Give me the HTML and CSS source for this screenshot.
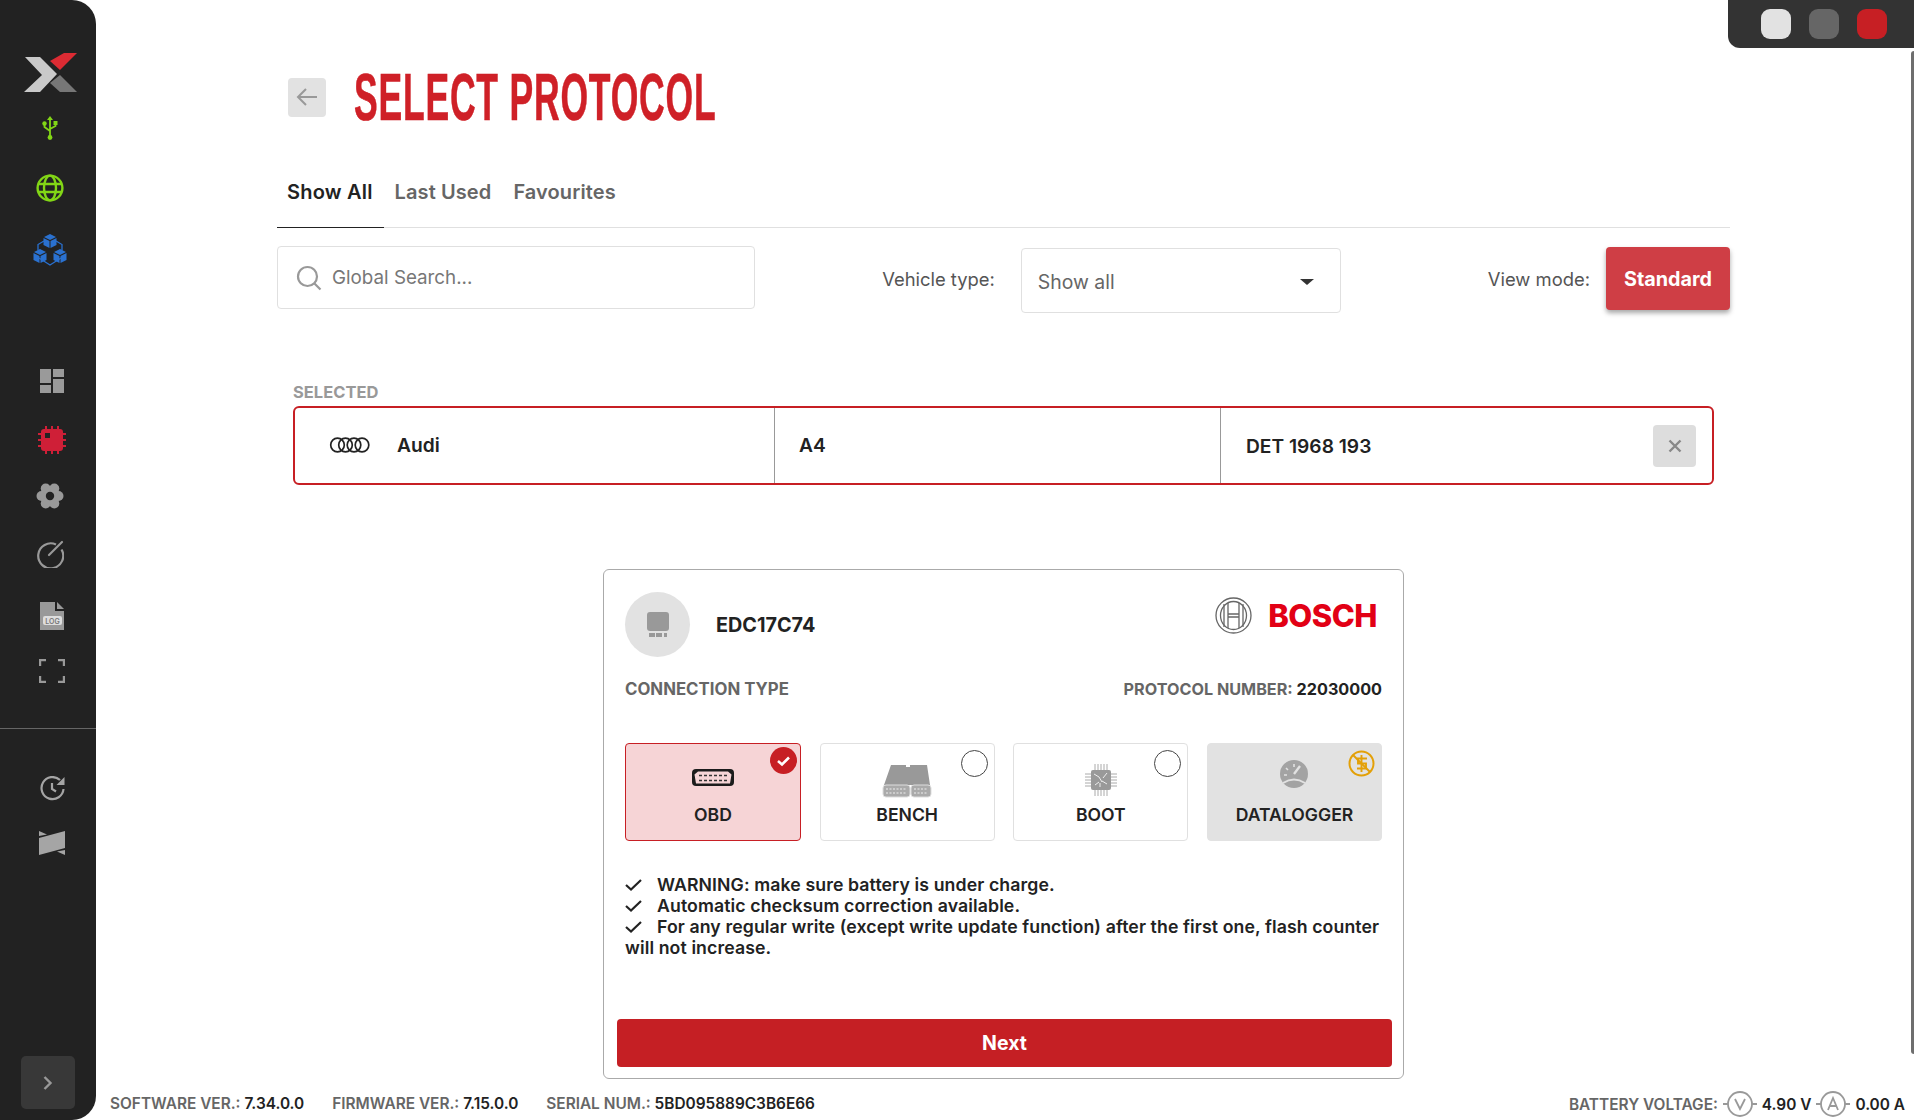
FILE: index.html
```html
<!DOCTYPE html>
<html lang="en">
<head>
    <meta charset="UTF-8">
    <title>Select Protocol</title>
    <link rel="stylesheet" href="styles.css">
</head>
<body>
    <aside class="sidebar">
        <svg class="logo" width="54" height="39" viewBox="0 0 54 39">
            <polygon points="1,4 16,4 33,21 16,39 0,39 18,22" fill="#c9c9c9"/>
            <polygon points="40,0 53,0 36,17 26,8" fill="#dc2b33"/>
            <polygon points="36,22 53,39 36,39 26,30" fill="#777"/>
        </svg>
        <svg class="icon-usb" width="16" height="24" viewBox="0 0 16 24" fill="none" stroke="#82d616" stroke-width="1.8">
            <path d="M8 3v18M2.500 8v3l5.500 4M13.500 7v3l-5.500 3"/>
            <path d="M8 0l3 4H5z" fill="#82d616" stroke="none"/>
            <circle cx="2.500" cy="7.500" r="2.200" fill="#82d616" stroke="none"/>
            <rect x="11.500" y="5" width="4" height="4" fill="#82d616" stroke="none"/>
            <circle cx="8" cy="21.500" r="2.400" fill="#82d616" stroke="none"/>
        </svg>
        <svg class="icon-globe" width="28" height="28" viewBox="0 0 28 28" fill="none" stroke="#82d616" stroke-width="2.400">
            <circle cx="14" cy="14" r="12.400"/>
            <ellipse cx="14" cy="14" rx="6" ry="12.400"/>
            <path d="M2 10h24M2 18h24"/>
        </svg>
        <svg class="icon-cubes" width="34" height="33" viewBox="0 0 34 33">
            <path d="M11 7L5 10.500v6M23 7l6 3.500v6M6 24l11 7 11-7" fill="none" stroke="#2a71d0" stroke-width="1.300"/>
            <g fill="#2a71d0">
                <path d="M17 0l6 3-6 3-6-3zM10.500 4l6 3v7l-6-3zM23.500 4l-6 3v7l6-3z"/>
                <path d="M7 15l6 3-6 3-6-3zM.5 19l6 3v7l-6-3zM13.500 19l-6 3v7l6-3z"/>
                <path d="M27 15l6 3-6 3-6-3zM20.500 19l6 3v7l-6-3zM33.500 19l-6 3v7l6-3z"/>
            </g>
        </svg>

        <nav class="nav-main">
            <div class="nav-slot shift">
                <svg width="24" height="24" viewBox="0 0 24 24" fill="#9a9a9a">
                    <rect width="11" height="14"/><rect y="16" width="11" height="8"/>
                    <rect x="13" width="11" height="8"/><rect x="13" y="10" width="11" height="14"/>
                </svg>
            </div>
            <div class="nav-slot shift drop-small">
                <svg width="28" height="28" viewBox="0 0 28 28">
                    <path d="M8 0v28M14 0v28M20 0v28M0 8h28M0 14h28M0 20h28" stroke="#cf1f37" stroke-width="2"/>
                    <rect x="3" y="3" width="22" height="22" rx="3" fill="#cf1f37"/>
                    <rect x="7" y="7" width="5" height="5" fill="#222"/>
                </svg>
            </div>
            <div class="nav-slot">
                <svg width="28" height="26" viewBox="-14 -13 28 26" fill="#999">
                    <circle r="9.500"/>
                    <circle cx="8.500" r="5"/><circle cx="-8.500" r="5"/>
                    <circle cx="4.300" cy="-7.500" r="5"/><circle cx="-4.300" cy="-7.500" r="5"/>
                    <circle cx="4.300" cy="7.500" r="5"/><circle cx="-4.300" cy="7.500" r="5"/>
                    <circle r="4.200" fill="#222"/>
                </svg>
            </div>
            <div class="nav-slot">
                <svg width="28" height="28" viewBox="0 0 28 28" fill="none" stroke="#999" stroke-width="2.200">
                    <path d="M20 4.500A12.500 12.500 0 1 0 25.500 9.500"/>
                    <path d="M13 15L26 2" stroke-linecap="round"/>
                </svg>
            </div>
            <div class="nav-slot shift drop-large">
                <svg width="24" height="28" viewBox="0 0 24 28">
                    <path d="M0 0h15v9h9v19H0z" fill="#999"/>
                    <path d="M17 0l7 7h-7z" fill="#999"/>
                    <rect x="3" y="14" width="19" height="9" rx="2" fill="#ddd"/>
                    <text x="12.500" y="21.500" class="log-text">LOG</text>
                </svg>
            </div>
            <div class="nav-slot shift drop-small">
                <svg width="26" height="24" viewBox="0 0 26 24" fill="none" stroke="#999" stroke-width="2.400">
                    <path d="M7 1H1v6M19 1h6v6M1 17v6h6M25 17v6h-6"/>
                </svg>
            </div>
        </nav>

        <div class="sidebar-rule"></div>

        <nav class="nav-extra">
            <div class="nav-slot shift">
                <svg width="25" height="25" viewBox="0 0 25 25" fill="none" stroke="#a5a5a5" stroke-width="2.200">
                    <path d="M20 4A11 11 0 1 0 23.500 13"/>
                    <path d="M12 7v6l4 2.500"/>
                    <path d="M24.500 1v8h-8z" fill="#a5a5a5" stroke="none"/>
                </svg>
            </div>
            <div class="nav-slot shift">
                <svg width="26" height="24" viewBox="0 0 26 24" fill="#a5a5a5">
                    <polygon points="0,7 26,0 26,17 0,24"/>
                    <polygon points="0,0 8,3.500 0,5"/>
                    <polygon points="26,24 18,20.500 26,19"/>
                </svg>
            </div>
        </nav>

        <button class="expand">
            <svg width="10" height="16" viewBox="0 0 10 16" fill="none" stroke="#999" stroke-width="2.400"><path d="M1.500 2l6 6-6 6"/></svg>
        </button>
    </aside>

    <main class="main">
        <div class="content">
            <div class="title-row">
                <button class="back">
                    <svg width="22" height="20" viewBox="0 0 22 20" fill="none" stroke="#999" stroke-width="2"><path d="M21 10H2M10 2l-8 8 8 8"/></svg>
                </button>
                <h1 class="title">SELECT PROTOCOL</h1>
            </div>

            <div class="tabs">
                <div class="tab active">Show All</div>
                <div class="tab">Last Used</div>
                <div class="tab">Favourites</div>
            </div>

            <div class="toolbar">
                <div class="search">
                    <svg width="26" height="26" viewBox="0 0 26 26" fill="none" stroke="#999" stroke-width="2.200">
                        <circle cx="11.500" cy="11.500" r="9.500"/><path d="M18.500 18.500l6 6"/>
                    </svg>
                    <span>Global Search...</span>
                </div>
                <div class="filters">
                    <span class="filter-label">Vehicle type:</span>
                    <div class="select">Show all<span class="caret"></span></div>
                    <span class="filter-label view-label">View mode:</span>
                    <button class="standard">Standard</button>
                </div>
            </div>

            <div class="selected-label">SELECTED</div>
            <div class="selected">
                <div class="cell cell-brand">
                    <svg width="42" height="16" viewBox="0 0 42 16" fill="none" stroke="#222" stroke-width="1.700">
                        <circle cx="8.500" cy="8" r="6.800"/><circle cx="16.500" cy="8" r="6.800"/>
                        <circle cx="25" cy="8" r="6.800"/><circle cx="33" cy="8" r="6.800"/>
                    </svg>
                    <span>Audi</span>
                </div>
                <div class="cell cell-model">A4</div>
                <div class="cell cell-engine">
                    <span>DET 1968 193</span>
                    <button class="clear">
                        <svg width="14" height="14" viewBox="0 0 14 14" stroke="#888" stroke-width="2.400"><path d="M1.500 1.500l11 11M12.500 1.500l-11 11"/></svg>
                    </button>
                </div>
            </div>

            <section class="card">
                <div class="card-head">
                    <div class="ecu-name">
                        <div class="ecu-thumb">
                            <svg width="24" height="26" viewBox="0 0 24 26" fill="#999">
                                <rect x="1" y="0" width="22" height="19" rx="3"/>
                                <rect x="3" y="21" width="6" height="4"/><rect x="10" y="21" width="6" height="4"/><rect x="18" y="21" width="3" height="4"/>
                            </svg>
                        </div>
                        <span>EDC17C74</span>
                    </div>
                    <div class="bosch">
                        <svg width="37" height="37" viewBox="0 0 37 37" fill="none" stroke="#666" stroke-width="1.300">
                            <circle cx="18.500" cy="18.500" r="17.500"/>
                            <path d="M9 7v23M13 6v25M24 6v25M28 7v23M13 17h11M13 20h11"/>
                            <ellipse cx="18.500" cy="18.500" rx="13" ry="14"/>
                        </svg>
                        <span>BOSCH</span>
                    </div>
                </div>

                <div class="conn-row">
                    <span>CONNECTION TYPE</span>
                    <span class="proto-num">PROTOCOL NUMBER: <b>22030000</b></span>
                </div>

                <div class="tiles">
                    <div class="tile tile-on">
                        <svg class="tile-icon icon-obd" width="44" height="20" viewBox="0 0 44 20">
                            <path d="M5 1h34q4 0 4 4v9q0 4-4 4H5q-4 0-4-4V5q0-4 4-4z" fill="#1c1c1c"/>
                            <path d="M7 3.500h30l3.500 3-1.500 9H5L3.500 6.500z" fill="#f6d4d6"/>
                            <path d="M8 7.500h28M8 12.500h28" stroke="#333" stroke-width="1.500" stroke-dasharray="3 2"/>
                        </svg>
                        <span>OBD</span>
                        <svg class="badge" width="27" height="27" viewBox="0 0 27 27">
                            <circle cx="13.500" cy="13.500" r="13.500" fill="#c71f24"/>
                            <path d="M8 14l4 3.500 7-7" fill="none" stroke="#fff" stroke-width="2.600"/>
                        </svg>
                    </div>
                    <div class="tile">
                        <svg class="tile-icon" width="50" height="34" viewBox="0 0 50 34">
                            <path d="M9 1h15v2h4V1h17l3 20H2z" fill="#999"/>
                            <rect x="1" y="21" width="27" height="12" rx="3" fill="#aaa" stroke="#ddd"/>
                            <rect x="29" y="21" width="20" height="12" rx="3" fill="#aaa" stroke="#ddd"/>
                            <path d="M4 25h21M4 29h21M32 25h14M32 29h14" stroke="#eee" stroke-dasharray="2 1.500"/>
                        </svg>
                        <span>BENCH</span>
                        <i class="radio"></i>
                    </div>
                    <div class="tile">
                        <svg class="tile-icon" width="32" height="32" viewBox="0 0 32 32">
                            <path d="M10 0v32M13 0v32M16 0v32M19 0v32M22 0v32M0 10h32M0 13h32M0 16h32M0 19h32M0 22h32" stroke="#aaa" stroke-width="1"/>
                            <rect x="6" y="6" width="20" height="20" rx="2" fill="#999"/>
                            <path d="M9 10l5 3 3 5M22 9l-4 5M10 21l4-3M22 20l-5-3M15 23v-4" stroke="#eee" stroke-width="1" fill="none"/>
                        </svg>
                        <span>BOOT</span>
                        <i class="radio"></i>
                    </div>
                    <div class="tile tile-off">
                        <svg class="tile-icon icon-gauge" width="28" height="28" viewBox="0 0 28 28">
                            <circle cx="14" cy="14" r="14" fill="#a3a3a3"/>
                            <path d="M14 14l6-8" stroke="#e2e2e2" stroke-width="2.400"/>
                            <path d="M3 23q11-7 22 0" fill="none" stroke="#e2e2e2" stroke-width="2"/>
                            <path d="M14 4v3M6 8l2 2M4 15h3" stroke="#e2e2e2" stroke-width="1.600"/>
                        </svg>
                        <span>DATALOGGER</span>
                        <svg class="radio-pay" width="27" height="27" viewBox="0 0 27 27" fill="none" stroke="#e3a008" stroke-width="2">
                            <circle cx="13.500" cy="13.500" r="12"/>
                            <path d="M5 5l17 17"/>
                            <path d="M19 8.500H10v5h8v5H9M13.500 5v17" stroke-width="1.900"/>
                        </svg>
                    </div>
                </div>

                <div class="notes">
                    <div><svg class="tick" width="17" height="12" viewBox="0 0 17 12" fill="none" stroke="#222" stroke-width="2.200"><path d="M1 6l5 4.500L16 1"/></svg>WARNING: make sure battery is under charge.</div>
                    <div><svg class="tick" width="17" height="12" viewBox="0 0 17 12" fill="none" stroke="#222" stroke-width="2.200"><path d="M1 6l5 4.500L16 1"/></svg>Automatic checksum correction available.</div>
                    <div><svg class="tick" width="17" height="12" viewBox="0 0 17 12" fill="none" stroke="#222" stroke-width="2.200"><path d="M1 6l5 4.500L16 1"/></svg>For any regular write (except write update function) after the first one, flash counter will not increase.</div>
                </div>

                <button class="next">Next</button>
            </section>
        </div>

        <footer class="footer">
            <div class="footer-left">
                <span>SOFTWARE VER.: <b>7.34.0.0</b></span>
                <span>FIRMWARE VER.: <b>7.15.0.0</b></span>
                <span>SERIAL NUM.: <b>5BD095889C3B6E66</b></span>
            </div>
            <div class="footer-right">
                <span>BATTERY VOLTAGE:</span>
                <svg width="34" height="26" viewBox="0 0 34 26" fill="none" stroke="#999" stroke-width="1.800">
                    <circle cx="17" cy="13" r="12"/><path d="M0 13h5M29 13h5M12 8l5 10 5-10"/>
                </svg>
                <b>4.90 V</b>
                <svg width="34" height="26" viewBox="0 0 34 26" fill="none" stroke="#999" stroke-width="1.800">
                    <circle cx="17" cy="13" r="12"/><path d="M0 13h5M29 13h5M12 19l5-12 5 12M13.500 15h7"/>
                </svg>
                <b>0.00 A</b>
            </div>
        </footer>
    </main>

    <!-- window controls and scrollbar sit over the page -->
    <div class="win-controls">
        <i class="win-btn light"></i>
        <i class="win-btn mid"></i>
        <i class="win-btn red"></i>
    </div>
    <div class="scroll-thumb"></div>
</body>
</html>
```

FILE: styles.css
```css
* {
    box-sizing: border-box;
}
body {
    margin: 0;
    width: 1914px;
    height: 1120px;
    overflow: hidden;
    display: flex;
    background: #fff;
    color: #222;
    font-family: 'Inter', 'Noto Sans', sans-serif;
}
button {
    font-family: inherit;
    border: none;
    cursor: pointer;
}

/* sidebar */
.sidebar {
    width: 96px;
    height: 1120px;
    flex-shrink: 0;
    display: flex;
    flex-direction: column;
    align-items: center;
    padding: 53px 0 11px;
    background: #222;
    border-radius: 0 24px 24px 0;
}
.logo {
    display: block;
    margin-left: 5px;
}
.icon-usb {
    margin: 24px 0 0 3px;
}
.icon-globe {
    margin: 34px 0 0 3px;
}
.icon-cubes {
    margin: 32px 0 0 3px;
}
.nav-main {
    margin-top: 85px;
    width: 100%;
}
.nav-extra {
    margin-top: 32px;
    width: 100%;
}
.nav-main .nav-slot {
    height: 57.6px;
}
.nav-extra .nav-slot {
    height: 55px;
}
.nav-slot {
    display: flex;
    justify-content: center;
    align-items: center;
    padding-left: 3px;
}
.nav-slot.shift {
    padding-left: 8px;
}
.nav-slot.drop-small {
    padding-top: 4px;
}
.nav-slot.drop-large {
    padding-top: 10px;
}
.log-text {
    font-size: 7px;
    font-weight: 600;
    fill: #777;
    text-anchor: middle;
}
.sidebar-rule {
    width: 100%;
    height: 1px;
    margin-top: 30px;
    background: #666;
}
.expand {
    width: 54px;
    height: 53px;
    margin-top: auto;
    background: #383838;
    border-radius: 5px;
    display: flex;
    align-items: center;
    justify-content: center;
}

/* main column */
.main {
    flex: 1;
    height: 1120px;
    display: flex;
    flex-direction: column;
}
.content {
    padding: 73px 184px 0 181px;
}
.title-row {
    height: 48px;
    display: flex;
    align-items: center;
    padding-left: 11px;
    gap: 28px;
}
.back {
    width: 38px;
    height: 39px;
    background: #e2e2e2;
    border-radius: 4px;
    display: flex;
    align-items: center;
    justify-content: center;
    padding: 0;
}
.title {
    margin: 0;
    width: 362px;
    font-family: 'Liberation Sans', Arial, sans-serif;
    font-size: 67px;
    line-height: 48px;
    font-weight: 700;
    letter-spacing: 1.5px;
    color: #cf2027;
    white-space: nowrap;
    -webkit-text-stroke: 0.6px #cf2027;
    transform: scaleX(0.53);
    transform-origin: left center;
}
.tabs {
    margin-top: 57px;
    display: flex;
    gap: 1px;
    border-bottom: 1px solid #e0e0e0;
}
.tab {
    padding: 1px 11px 23px 10px;
    height: 50px;
    line-height: 26px;
    font-size: 20px;
    letter-spacing: 0.1px;
    font-weight: 600;
    color: #666;
    margin-bottom: -1px;
}
.tab.active {
    color: #222;
    letter-spacing: 0.2px;
    border-bottom: 1px solid #222;
}

/* search + filters */
.toolbar {
    margin-top: 18px;
    display: flex;
    align-items: flex-start;
    justify-content: space-between;
}
.search {
    width: 478px;
    height: 63px;
    display: flex;
    align-items: center;
    gap: 10px;
    padding-left: 18px;
    border: 1px solid #e0e0e0;
    border-radius: 4px;
    color: #777;
    font-size: 18.8px;
}
.filters {
    display: flex;
    align-items: flex-start;
}
.filter-label {
    font-size: 18.400px;
    line-height: 24px;
    color: #555;
    margin-top: 21px;
}
.select {
    width: 320px;
    height: 65px;
    margin: 2px 0 0 26px;
    padding: 2px 26px 0 16px;
    display: flex;
    align-items: center;
    justify-content: space-between;
    border: 1px solid #e0e0e0;
    border-radius: 4px;
    color: #666;
    font-size: 19.400px;
}
.caret {
    width: 0;
    height: 0;
    border-left: 7px solid transparent;
    border-right: 7px solid transparent;
    border-top: 6px solid #333;
}
.view-label {
    margin-left: 147px;
}
.standard {
    width: 124px;
    height: 63px;
    margin: 1px 0 0 16px;
    padding: 0;
    background: #cf3e45;
    color: #fff;
    font-size: 19.800px;
    font-weight: 700;
    border-radius: 4px;
    box-shadow: 0 3px 5px rgba(0, 0, 0, 0.35);
}

/* selected strip */
.selected-label {
    margin: 70px 16px 0;
    height: 18px;
    line-height: 18px;
    font-size: 16.500px;
    font-weight: 700;
    color: #999;
}
.selected {
    margin: 5px 16px 0;
    height: 79px;
    display: flex;
    border: 2px solid #c71f24;
    border-radius: 6px;
    font-size: 19.200px;
    font-weight: 600;
}
.cell {
    display: flex;
    align-items: center;
    padding-bottom: 1px;
}
.cell-brand {
    width: 480px;
    padding-left: 34px;
    gap: 26px;
    border-right: 1px solid #999;
}
.cell-model {
    width: 446px;
    padding-left: 24px;
    border-right: 1px solid #999;
}
.cell-engine {
    flex: 1;
    padding: 0 16px 0 25px;
    justify-content: space-between;
}
.clear {
    width: 43px;
    height: 42px;
    padding: 0;
    background: #ddd;
    border-radius: 4px;
    display: flex;
    align-items: center;
    justify-content: center;
}

/* protocol card */
.card {
    width: 801px;
    height: 510px;
    margin: 84px auto 0;
    padding: 22px 21px 11px;
    display: flex;
    flex-direction: column;
    border: 1px solid #aaa;
    border-radius: 6px;
}
.card-head {
    height: 65px;
    display: flex;
    justify-content: space-between;
}
.ecu-name {
    display: flex;
    align-items: center;
    gap: 26px;
    font-size: 19.800px;
    font-weight: 700;
}
.ecu-thumb {
    width: 65px;
    height: 65px;
    border-radius: 50%;
    background: #e2e2e2;
    display: flex;
    align-items: center;
    justify-content: center;
}
.bosch {
    display: flex;
    align-items: flex-start;
    gap: 16px;
    padding-top: 5px;
    padding-right: 5px;
    font-size: 31px;
    line-height: 37px;
    font-weight: 800;
    color: #e20015;
    letter-spacing: -0.5px;
}
.conn-row {
    margin-top: 22px;
    height: 20px;
    display: flex;
    justify-content: space-between;
    line-height: 20px;
    font-size: 16.800px;
    font-weight: 700;
    color: #666;
}
.proto-num {
    font-size: 16.200px;
}
.conn-row b {
    color: #222;
    font-weight: 700;
}
.tiles {
    margin-top: 44px;
    display: grid;
    grid-template-columns: 176px 175px 175px 175px;
    justify-content: space-between;
}
.tile {
    position: relative;
    height: 98px;
    display: flex;
    flex-direction: column;
    align-items: center;
    justify-content: flex-end;
    padding-bottom: 15px;
    border: 1px solid #e0e0e0;
    border-radius: 4px;
    font-size: 17.600px;
    line-height: 20px;
    font-weight: 600;
}
.tile-icon {
    position: absolute;
    top: 20px;
    left: 50%;
    transform: translateX(-50%);
}
.tile-icon.icon-obd {
    top: 24px;
}
.tile-icon.icon-gauge {
    top: 16px;
}
.tile-on {
    background: #f6d4d6;
    border-color: #c71f24;
}
.tile-off {
    background: #e2e2e2;
    border-color: #e2e2e2;
}
.badge,
.radio-pay {
    position: absolute;
    top: 3px;
    right: 3px;
}
.radio-pay {
    top: 6px;
    right: 6px;
}
.radio {
    position: absolute;
    top: 6px;
    right: 6px;
    width: 27px;
    height: 27px;
    border: 1px solid #444;
    border-radius: 50%;
    background: #fff;
}
.notes {
    margin-top: 33px;
    font-size: 17.700px;
    letter-spacing: 0.1px;
    line-height: 21px;
    font-weight: 600;
}
.tick {
    margin-right: 15px;
}
.next {
    height: 48px;
    margin: auto -10px 0 -8px;
    background: #c51f24;
    color: #fff;
    font-size: 19.500px;
    font-weight: 700;
    border-radius: 4px;
}

/* footer */
.footer {
    margin-top: auto;
    height: 34px;
    padding: 0 9px 0 14px;
    display: flex;
    align-items: center;
    justify-content: space-between;
    font-size: 15.400px;
    font-weight: 600;
    color: #666;
}
.footer b {
    color: #222;
    font-weight: 600;
}
.footer-left {
    display: flex;
    gap: 28px;
}
.footer-right {
    display: flex;
    align-items: center;
    gap: 5px;
    margin-top: 2px;
}

/* overlays */
.win-controls {
    position: absolute;
    top: 0;
    right: 0;
    width: 186px;
    height: 48px;
    padding: 9px 27px 0 33px;
    display: flex;
    justify-content: space-between;
    background: #333;
    border-radius: 0 0 0 12px;
}
.win-btn {
    width: 30px;
    height: 30px;
    border-radius: 9px;
}
.light {
    background: #e2e2e2;
}
.mid {
    background: #666;
}
.red {
    background: #c71f24;
}
.scroll-thumb {
    position: absolute;
    top: 51px;
    right: 0;
    width: 3px;
    height: 1003px;
    background: #6e6e6e;
    border-radius: 3px 0 0 3px;
}
```
